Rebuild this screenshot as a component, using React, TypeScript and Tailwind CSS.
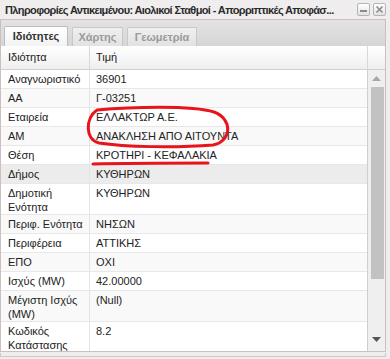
import React from "react";

type Row = { k: string[]; v: string; h: number; alt?: boolean; hover?: boolean };

const rows: Row[] = [
  { k: ["Αναγνωριστικό"], v: "36901", h: 19 },
  { k: ["ΑΑ"], v: "Γ-03251", h: 19, alt: true },
  { k: ["Εταιρεία"], v: "ΕΛΛΑΚΤΩΡ Α.Ε.", h: 19 },
  { k: ["ΑΜ"], v: "ΑΝΑΚΛΗΣΗ ΑΠΟ ΑΙΤΟΥΝΤΑ", h: 19, alt: true },
  { k: ["Θέση"], v: "ΚΡΟΤΗΡΙ - ΚΕΦΑΛΑΚΙΑ", h: 19 },
  { k: ["Δήμος"], v: "ΚΥΘΗΡΩΝ", h: 19, hover: true },
  { k: ["Δημοτική", "Ενότητα"], v: "ΚΥΘΗΡΩΝ", h: 31 },
  { k: ["Περιφ. Ενότητα"], v: "ΝΗΣΩΝ", h: 19, alt: true },
  { k: ["Περιφέρεια"], v: "ΑΤΤΙΚΗΣ", h: 19 },
  { k: ["ΕΠΟ"], v: "ΟΧΙ", h: 19, alt: true },
  { k: ["Ισχύς (MW)"], v: "42.00000", h: 19 },
  { k: ["Μέγιστη Ισχύς", "(MW)"], v: "(Null)", h: 31, alt: true },
  { k: ["Κωδικός", "Κατάστασης"], v: "8.2", h: 31 },
];

export default function App() {
  return (
    <div
      className="relative w-[390px] h-[359px] overflow-hidden bg-[#efeded] text-[#222]"
      style={{ fontFamily: '"Liberation Sans", Arial, sans-serif' }}
    >
      {/* title bar */}
      <div className="h-[19px] flex items-center pl-[5px] pr-[4px]">
        <div className="flex-1 text-[11px] font-bold tracking-[-0.62px] text-[#2b2b2b] whitespace-nowrap overflow-hidden leading-[14px]">
          Πληροφορίες Αντικειμένου: Αιολικοί Σταθμοί - Απορριπτικές Αποφάσ...
        </div>
        <div className="flex gap-[3px] items-center">
          <div className="w-[13px] h-[13px] border border-[#b5b5b5] rounded-[2px] bg-gradient-to-b from-white to-[#e2e2e2] flex items-end justify-center pb-[3px]">
            <div className="w-[7px] h-[2px] bg-[#8a8a8a]" />
          </div>
          <div className="w-[13px] h-[13px] border border-[#b5b5b5] rounded-[2px] bg-gradient-to-b from-white to-[#e2e2e2] flex items-center justify-center">
            <svg width="9" height="9" viewBox="0 0 9 9">
              <path d="M1.5 1.5 L7.5 7.5 M7.5 1.5 L1.5 7.5" stroke="#8a8a8a" strokeWidth="1.6" />
            </svg>
          </div>
        </div>
      </div>

      {/* panel */}
      <div className="mr-[4px] h-[333px] border border-[#cbbfbf] bg-white flex flex-col overflow-hidden">
        {/* tabs strip */}
        <div className="h-[26px] shrink-0 bg-gradient-to-b from-[#e3e3e3] to-[#d6d6d6] flex items-end pl-[3px] gap-[4px]">
          <div className="h-[20px] w-[64px] border border-b-0 border-[#bdbdbd] rounded-t-[2px] bg-gradient-to-b from-white to-[#f3f3f3] flex items-center justify-center text-[11px] font-bold text-[#333]">
            Ιδιότητες
          </div>
          <div className="h-[19px] w-[51px] border border-b-0 border-[#c8c8c8] rounded-t-[2px] bg-gradient-to-b from-[#f0f0f0] to-[#e2e2e2] flex items-center justify-center text-[11px] font-bold text-[#9a9a9a]">
            Χάρτης
          </div>
          <div className="h-[19px] w-[70px] border border-b-0 border-[#c8c8c8] rounded-t-[2px] bg-gradient-to-b from-[#f0f0f0] to-[#e2e2e2] flex items-center justify-center text-[11px] font-bold text-[#9a9a9a]">
            Γεωμετρία
          </div>
        </div>

        {/* header */}
        <div className="h-[24px] shrink-0 flex bg-gradient-to-b from-white to-[#efefef] border-b border-[#d0d0d0] text-[11px] text-[#222]">
          <div className="w-[89px] border-r border-[#d8d8d8] flex items-center pl-[7px]">Ιδιότητα</div>
          <div className="flex-1 flex items-center pl-[6px]">Τιμή</div>
          <div className="w-[18px] border-l border-[#d8d8d8]" />
        </div>

        {/* body */}
        <div className="flex-1 flex overflow-hidden">
          <div className="flex-1 flex flex-col">
            {rows.map((r, i) => (
              <div
                key={i}
                className={`shrink-0 flex border-b border-[#e8e8e8] text-[11px] leading-[14px] ${
                  r.hover ? "bg-[#ececec]" : r.alt ? "bg-[#f9f9f9]" : "bg-white"
                }`}
                style={{ height: r.h }}
              >
                <div className="w-[89px] border-r border-[#e4e4e4] pl-[7px] pt-[2px]">
                  {r.k.map((t, j) => (
                    <div key={j}>{t}</div>
                  ))}
                </div>
                <div className="flex-1 pl-[6px] pt-[2px] whitespace-nowrap">{r.v}</div>
              </div>
            ))}
          </div>
          {/* scrollbar */}
          <div className="w-[18px] shrink-0 bg-[#efefef] border-l border-[#cfcfcf] flex flex-col items-center">
            <div className="h-[17px] flex items-center justify-center">
              <svg width="9" height="5" viewBox="0 0 9 5">
                <path d="M0 5 L4.5 0 L9 5 Z" fill="#a8a8a8" />
              </svg>
            </div>
            <div className="w-[13px] h-[192px] bg-[#c2c2c2] ml-[1px]" />
            <div className="flex-1" />
            <div className="h-[16px] flex items-start justify-center pt-[2px]">
              <svg width="9" height="5" viewBox="0 0 9 5">
                <path d="M0 0 L9 0 L4.5 5 Z" fill="#555" />
              </svg>
            </div>
          </div>
        </div>
      </div>

      {/* window bottom */}
      <div className="mr-[4px] h-[4px] mt-[1px] border border-t-0 border-[#d0c8c8]" />

      {/* red annotations */}
      <svg className="absolute inset-0 pointer-events-none" width="390" height="359" viewBox="0 0 390 359">
        <path
          d="M97 110 C 130 107, 192 105, 214 112 C 233 119, 232 141, 213 145 C 175 148, 125 147, 99 143 C 85 140, 85 118, 97 110"
          fill="none"
          stroke="#e8141c"
          strokeWidth="3"
          strokeLinecap="round"
        />
        <path d="M93 164 C 130 163, 175 163, 208 163" fill="none" stroke="#e8141c" strokeWidth="3" strokeLinecap="round" />
      </svg>
    </div>
  );
}
